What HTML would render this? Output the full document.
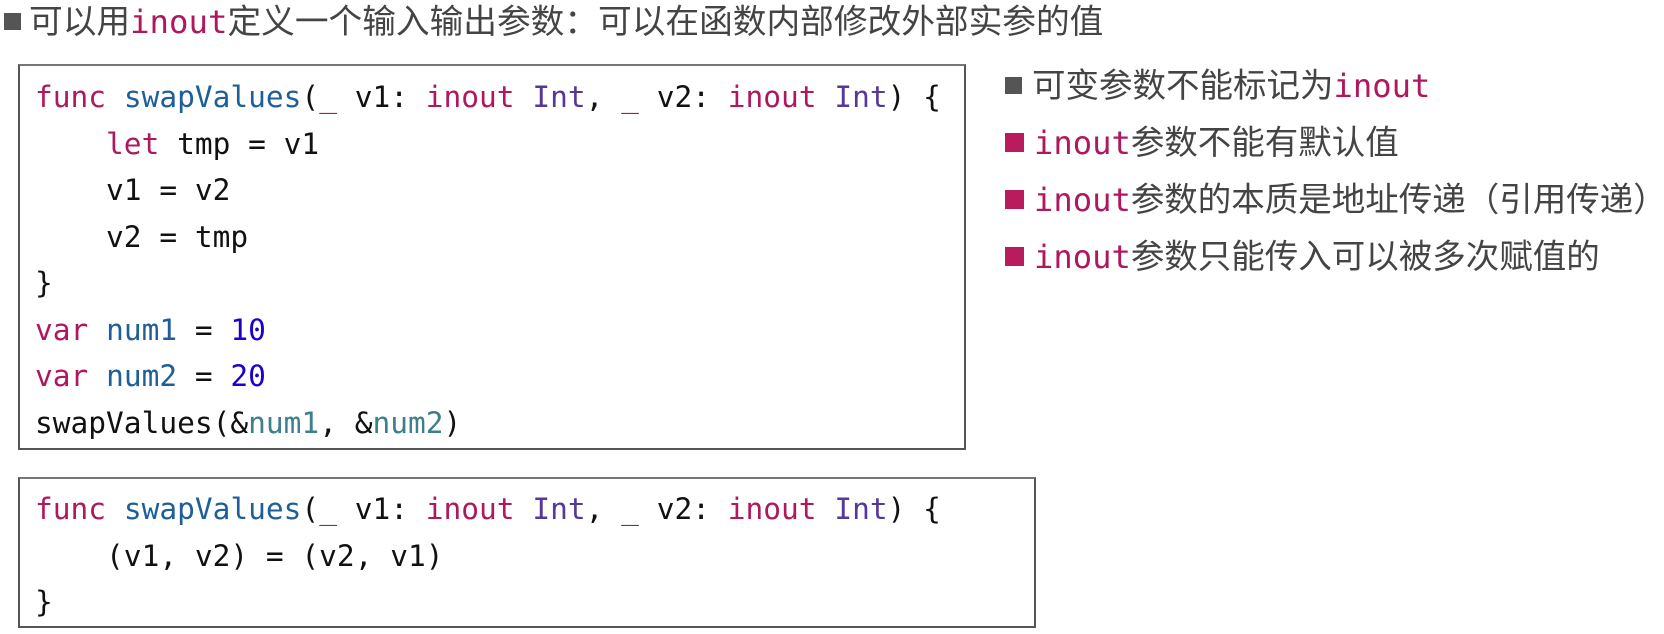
<!DOCTYPE html>
<html><head><meta charset="utf-8"><style>
body{margin:0;width:1664px;height:634px;background:#fff;position:relative;overflow:hidden;font-family:"Liberation Sans","Noto Sans CJK SC",sans-serif;color:#444}
.h{position:absolute;left:0;top:0;height:44px;line-height:44px;font-size:33.7px;white-space:nowrap}
.m{font-family:"DejaVu Sans Mono","Liberation Mono",monospace;color:#b0185e;font-size:0.96em}
.sq{display:inline-block;width:17px;height:17px;background:#555;margin:0 10px 0 6px;vertical-align:middle;position:relative;top:-3px}
.sq.r{background:#b81c5c;width:19px;height:19px}
.b{position:absolute;left:1000px;font-size:33.5px;line-height:40px;white-space:nowrap;color:#444}
.box{position:absolute;border:2px solid #555;border-top-color:#777;background:#fff}
pre{margin:0;font-family:"DejaVu Sans Mono","Liberation Mono",monospace;font-size:29.5px;line-height:46.5px;color:#111;padding-left:15px}
.k{color:#b0185e}.f{color:#1f5f99}.t{color:#55389a}.n{color:#1c00cf}.v{color:#1f5f99}.u{color:#3d7f8a}
</style></head><body>
<div class="h"><span class="sq" style="margin-left:4px;margin-right:8px"></span>可以用<span class="m">inout</span>定义一个输入输出参数：可以在函数内部修改外部实参的值</div>
<div class="box" style="left:18px;top:64px;width:944px;height:382px">
<pre style="padding-top:8px"><span class="k">func</span> <span class="f">swapValues</span>(<span class="k">_</span> v1: <span class="k">inout</span> <span class="t">Int</span>, <span class="k">_</span> v2: <span class="k">inout</span> <span class="t">Int</span>) {
    <span class="k">let</span> tmp = v1
    v1 = v2
    v2 = tmp
}
<span class="k">var</span> <span class="v">num1</span> = <span class="n">10</span>
<span class="k">var</span> <span class="v">num2</span> = <span class="n">20</span>
swapValues(&amp;<span class="u">num1</span>, &amp;<span class="u">num2</span>)</pre></div>
<div class="box" style="left:18px;top:477px;width:1014px;height:147px">
<pre style="padding-top:7px"><span class="k">func</span> <span class="f">swapValues</span>(<span class="k">_</span> v1: <span class="k">inout</span> <span class="t">Int</span>, <span class="k">_</span> v2: <span class="k">inout</span> <span class="t">Int</span>) {
    (v1, v2) = (v2, v1)
}</pre></div>
<div class="b" style="top:66px"><span class="sq" style="margin-left:5px"></span>可变参数不能标记为<span class="m">inout</span></div>
<div class="b" style="top:123px"><span class="sq r" style="margin-left:5px"></span><span class="m">inout</span>参数不能有默认值</div>
<div class="b" style="top:180px"><span class="sq r" style="margin-left:5px"></span><span class="m">inout</span>参数的本质是地址传递（引用传递）</div>
<div class="b" style="top:237px"><span class="sq r" style="margin-left:5px"></span><span class="m">inout</span>参数只能传入可以被多次赋值的</div>
</body></html>
